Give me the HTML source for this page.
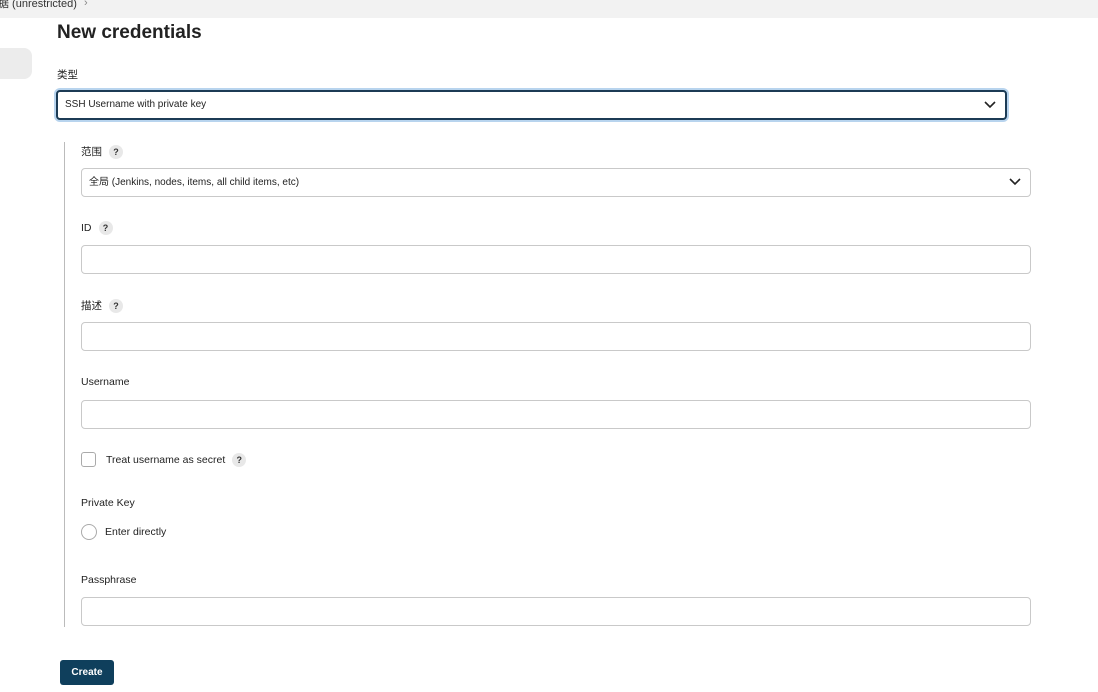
<!DOCTYPE html>
<html><head><meta charset="utf-8"><style>
body{margin:0;width:1098px;height:692px;background:#fff;font-family:"Liberation Sans","Noto Sans CJK SC",sans-serif;color:#222;position:relative;overflow:hidden}
.a{position:absolute}
.top{left:0;top:0;width:1098px;height:18px;background:#f2f2f2;font-size:11px;color:#333;line-height:9px}
.lbl{font-size:10.5px;color:#222}
.in{border:1px solid #c9c9c9;border-radius:4px;background:#fff;box-sizing:border-box;height:29px}
.q{display:inline-block;width:14px;height:14px;border-radius:7px;background:#e8e8e8;font-size:9px;font-weight:bold;text-align:center;line-height:14px;color:#333;margin-left:7px;vertical-align:middle}
.chev{position:absolute;right:9px;top:8px}
</style></head><body>
<div class="a top"><span style="position:absolute;left:-2px;top:0">据 (unrestricted)</span><span style="position:absolute;left:84px;top:-1px;color:#888">›</span></div>
<div class="a" style="left:0;top:48px;width:32px;height:31px;background:#ececec;border-radius:0 8px 8px 0"></div>
<div class="a" style="left:57px;top:22px;font-size:19px;font-weight:bold;color:#222">New credentials</div>
<div class="a lbl" style="left:57px;top:67px">类型</div>
<div class="a in" style="left:56px;top:90px;width:951px;height:30px;border:2px solid #1c3b55;box-shadow:0 0 0 2px #b8d4ee;font-size:10px;line-height:26px;padding-left:7px">SSH Username with private key<svg class="chev" width="12" height="10" viewBox="0 0 12 10"><path d="M1 2l5 5 5-5" fill="none" stroke="#222" stroke-width="1.6"/></svg></div>
<div class="a" style="left:64px;top:142px;width:1px;height:485px;background:#bbb"></div>
<div class="a lbl" style="left:81px;top:144px">范围<span class="q">?</span></div>
<div class="a in" style="left:81px;top:168px;width:950px;font-size:10px;line-height:27px;padding-left:7px">全局 (Jenkins, nodes, items, all child items, etc)<svg class="chev" width="12" height="10" viewBox="0 0 12 10"><path d="M1 2l5 5 5-5" fill="none" stroke="#222" stroke-width="1.6"/></svg></div>
<div class="a lbl" style="left:81px;top:221px">ID<span class="q">?</span></div>
<div class="a in" style="left:81px;top:245px;width:950px"></div>
<div class="a lbl" style="left:81px;top:298px">描述<span class="q">?</span></div>
<div class="a in" style="left:81px;top:322px;width:950px"></div>
<div class="a lbl" style="left:81px;top:376px">Username</div>
<div class="a in" style="left:81px;top:400px;width:950px"></div>
<div class="a" style="left:81px;top:452px;width:15px;height:15px;border:1px solid #aaa;border-radius:3px;box-sizing:border-box"></div>
<div class="a lbl" style="left:106px;top:453px">Treat username as secret<span class="q">?</span></div>
<div class="a lbl" style="left:81px;top:497px">Private Key</div>
<div class="a" style="left:81px;top:524px;width:16px;height:16px;border:1px solid #aaa;border-radius:50%;box-sizing:border-box"></div>
<div class="a lbl" style="left:105px;top:526px">Enter directly</div>
<div class="a lbl" style="left:81px;top:574px">Passphrase</div>
<div class="a in" style="left:81px;top:597px;width:950px"></div>
<div class="a" style="left:60px;top:660px;width:54px;height:25px;background:#0f3f5c;border-radius:3px;color:#fff;font-size:10px;font-weight:bold;text-align:center;line-height:25px">Create</div>
</body></html>
